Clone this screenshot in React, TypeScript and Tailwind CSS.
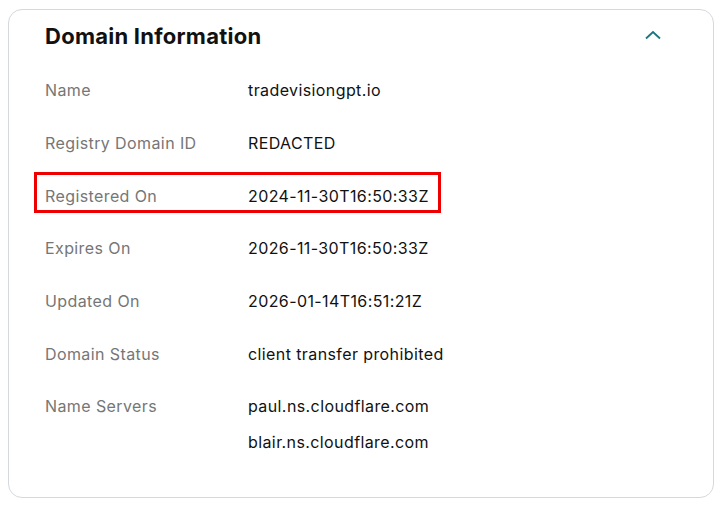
import React from "react";

const rows: { label: string; values: string[]; highlight?: boolean }[] = [
  { label: "Name", values: ["tradevisiongpt.io"] },
  { label: "Registry Domain ID", values: ["REDACTED"] },
  { label: "Registered On", values: ["2024-11-30T16:50:33Z"], highlight: true },
  { label: "Expires On", values: ["2026-11-30T16:50:33Z"] },
  { label: "Updated On", values: ["2026-01-14T16:51:21Z"] },
  { label: "Domain Status", values: ["client transfer prohibited"] },
];

export default function App() {
  return (
    <div className="w-[722px] h-[511px] bg-white pt-[9px] pl-[8px]" style={{ fontFamily: "Inter, 'Noto Sans', sans-serif" }}>
      <div className="w-[706px] h-[489px] rounded-[14px] border border-[#d4d9de] pl-[36px] pr-[50px]">
        <div className="flex items-center justify-between h-[52px]">
          <h2 className="text-[22px] font-bold text-[#111] tracking-[0.25px]">Domain Information</h2>
          <svg width="18" height="12" viewBox="0 0 18 12" className="mr-[1px] mt-[-3px]">
            <path d="M2 9.5 L9 3 L16 9.5" fill="none" stroke="#1b7580" strokeWidth="1.8" />
          </svg>
        </div>
        <div className="mt-[2px] tracking-[0.4px]">
          {rows.map((r) => (
            <div key={r.label} className="relative flex items-center h-[52.7px] text-[16px]">
              {r.highlight && (
                <div className="absolute left-[-11px] top-[3px] w-[407px] h-[41px] border-[3px] border-[#ee0000]" />
              )}
              <div className="w-[203px] text-[#767676]">{r.label}</div>
              <div className="text-[#111]">{r.values[0]}</div>
            </div>
          ))}
          <div className="flex text-[16px] pt-[14px]">
            <div className="w-[203px] text-[#767676] leading-[24px]">Name Servers</div>
            <div className="text-[#111] flex flex-col gap-[12px] leading-[24px]">
              <div>paul.ns.cloudflare.com</div>
              <div>blair.ns.cloudflare.com</div>
            </div>
          </div>
        </div>
      </div>
    </div>
  );
}
